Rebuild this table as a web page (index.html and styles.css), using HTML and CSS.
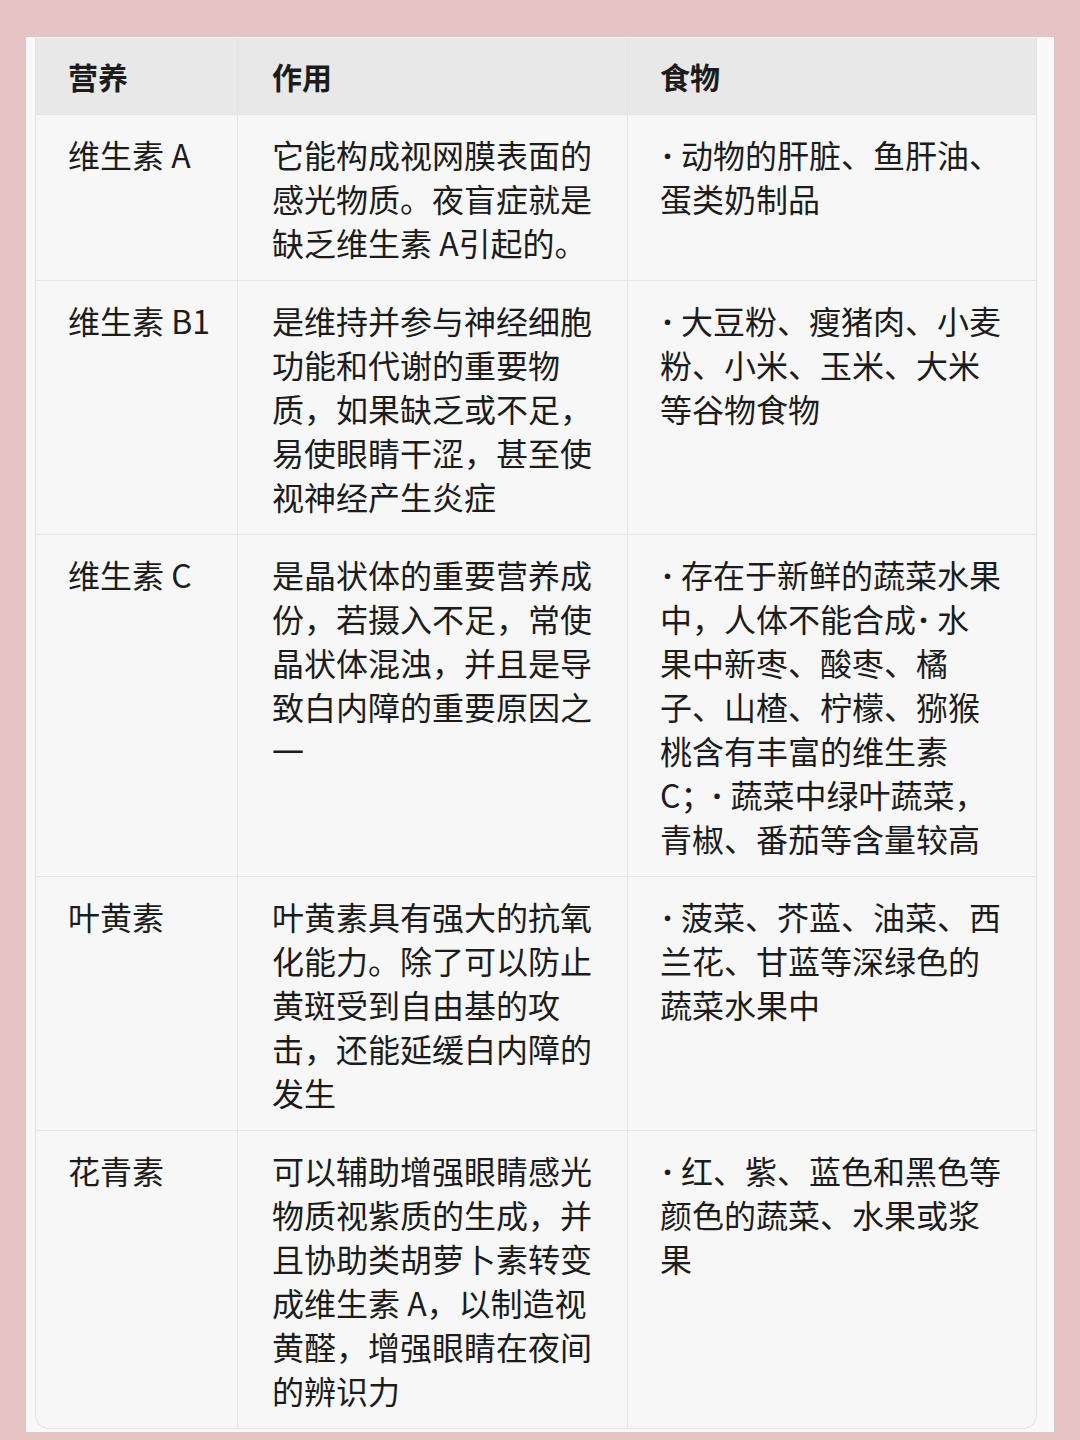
FILE: index.html
```html
<!DOCTYPE html>
<html lang="zh-CN">
<head>
<meta charset="utf-8">
<title>营养表</title>
<link rel="stylesheet" href="styles.css">
</head>
<body>
<div class="page">
  <div class="card">
    <table class="nutri">
      <colgroup>
        <col class="c1"><col class="c2"><col class="c3">
      </colgroup>
      <thead>
        <tr><th>营养</th><th>作用</th><th>食物</th></tr>
      </thead>
      <tbody>
        <tr>
          <td>维生素 A</td>
          <td>它能构成视网膜表面的<br>感光物质。夜盲症就是<br>缺乏维生素 A引起的。</td>
          <td><span class="dot">·</span>动物的肝脏、鱼肝油、<br>蛋类奶制品</td>
        </tr>
        <tr>
          <td>维生素 B1</td>
          <td>是维持并参与神经细胞<br>功能和代谢的重要物<br>质，如果缺乏或不足，<br>易使眼睛干涩，甚至使<br>视神经产生炎症</td>
          <td><span class="dot">·</span>大豆粉、瘦猪肉、小麦<br>粉、小米、玉米、大米<br>等谷物食物</td>
        </tr>
        <tr>
          <td>维生素 C</td>
          <td>是晶状体的重要营养成<br>份，若摄入不足，常使<br>晶状体混浊，并且是导<br>致白内障的重要原因之<br>一</td>
          <td><span class="dot">·</span>存在于新鲜的蔬菜水果<br>中，人体不能合成<span class="dot">·</span>水<br>果中新枣、酸枣、橘<br>子、山楂、柠檬、猕猴<br>桃含有丰富的维生素<br>C；<span class="dot wide">·</span>蔬菜中绿叶蔬菜，<br>青椒、番茄等含量较高</td>
        </tr>
        <tr>
          <td>叶黄素</td>
          <td>叶黄素具有强大的抗氧<br>化能力。除了可以防止<br>黄斑受到自由基的攻<br>击，还能延缓白内障的<br>发生</td>
          <td><span class="dot">·</span>菠菜、芥蓝、油菜、西<br>兰花、甘蓝等深绿色的<br>蔬菜水果中</td>
        </tr>
        <tr>
          <td>花青素</td>
          <td>可以辅助增强眼睛感光<br>物质视紫质的生成，并<br>且协助类胡萝卜素转变<br>成维生素 A，以制造视<br>黄醛，增强眼睛在夜间<br>的辨识力</td>
          <td><span class="dot">·</span>红、紫、蓝色和黑色等<br>颜色的蔬菜、水果或浆<br>果</td>
        </tr>
      </tbody>
    </table>
  </div>
</div>
</body>
</html>
```

FILE: styles.css
```css
html, body {
  margin: 0;
  padding: 0;
  background: #e7c4c4;
}

body {
  width: 1080px;
  height: 1440px;
  overflow: hidden;
  font-family: "Noto Sans CJK SC", "Noto Sans", sans-serif;
  color: #1c1c1c;
}

.page {
  padding: 37px 0 0 26px;
}

.card {
  width: 1028px;
  box-sizing: border-box;
  background: #f9f9f9;
  padding: 1px 19px 3px 9px;
  box-shadow: 1px 0 0 #d6c4c4;
}

.nutri {
  width: 1000px;
  table-layout: fixed;
  border-collapse: separate;
  border-spacing: 0;
  background: #f7f7f7;
  border: 1px solid #e4e4e4;
  border-top: none;
  border-radius: 0 0 14px 14px;
  overflow: hidden;
}

.c1 { width: 202px; }
.c2 { width: 390px; }
.c3 { width: 408px; }

.nutri th,
.nutri td {
  text-align: left;
  vertical-align: top;
  border-right: 1px solid #e4e4e4;
  border-bottom: 1px solid #e4e4e4;
  padding: 17px 20px 16px 32px;
  font-size: 32px;
  line-height: 44px;
  font-weight: 400;
  white-space: nowrap;
}

.nutri th:last-child,
.nutri td:last-child {
  border-right: none;
}

.nutri tbody tr:last-child td {
  border-bottom: none;
  padding-bottom: 16px;
}

.nutri th {
  background: #e8e8e8;
  font-size: 30px;
  font-weight: 700;
  line-height: 40px;
  padding-top: 18px;
  padding-bottom: 18px;
}

.nutri td:nth-child(2),
.nutri th:nth-child(2) {
  padding-left: 34px;
}

.dot {
  font-family: "Noto Sans", sans-serif;
  font-weight: 700;
  line-height: 1;
  margin: 0 9px 0 3px;
}

.dot.wide {
  margin-left: 16px;
}
```
